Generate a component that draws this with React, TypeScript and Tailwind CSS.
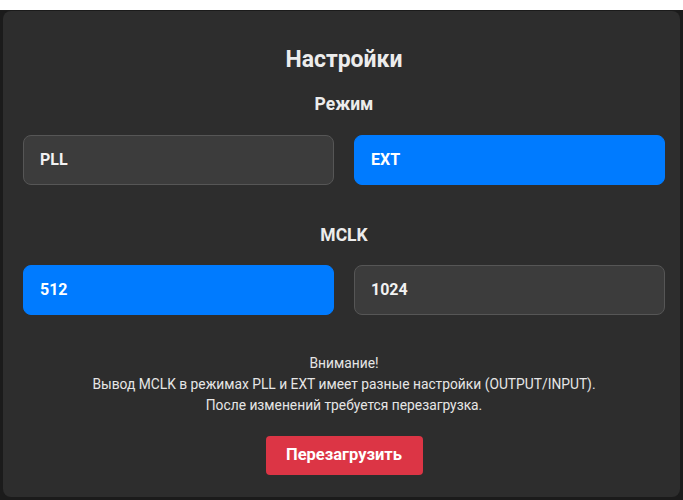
import { useState } from 'react';

const FONT = { fontFamily: 'Roboto, "Liberation Sans", Arial, sans-serif' };

function Choice({
  label,
  active,
  onClick,
}: {
  label: string;
  active: boolean;
  onClick: () => void;
}) {
  return (
    <button
      onClick={onClick}
      className={
        active
          ? 'h-[50px] flex-1 rounded-lg border border-[#007bff] bg-[#007bff] px-4 text-left text-[16px] font-bold text-white'
          : 'h-[50px] flex-1 rounded-lg border border-[#565656] bg-[#3c3c3c] px-4 text-left text-[16px] font-bold text-[#f2f2f2]'
      }
    >
      {label}
    </button>
  );
}

export default function App() {
  const [mode, setMode] = useState<'PLL' | 'EXT'>('EXT');
  const [mclk, setMclk] = useState<512 | 1024>(512);

  return (
    <div className="min-h-[500px] bg-[#1b1b1b]" style={FONT}>
      <div className="h-[10px] bg-white" />
      <div className="pt-px pl-[3px]">
        <div className="flex h-[486px] w-[677px] flex-col rounded-lg bg-[#2d2d2d] pt-[34px] pr-[15px] pl-5">
          <h1 className="text-center text-[23px] leading-[30px] font-bold text-[#ececec]">
            Настройки
          </h1>

          {/* Mode */}
          <h2 className="mt-[17px] text-center text-[17.5px] leading-6 font-bold text-[#ececec]">
            Режим
          </h2>
          <div className="mt-[19px] flex gap-5">
            <Choice label="PLL" active={mode === 'PLL'} onClick={() => setMode('PLL')} />
            <Choice label="EXT" active={mode === 'EXT'} onClick={() => setMode('EXT')} />
          </div>

          {/* MCLK */}
          <h2 className="mt-[38px] text-center text-[17.5px] leading-6 font-bold text-[#ececec]">
            MCLK
          </h2>
          <div className="mt-[18px] flex gap-5">
            <Choice label="512" active={mclk === 512} onClick={() => setMclk(512)} />
            <Choice label="1024" active={mclk === 1024} onClick={() => setMclk(1024)} />
          </div>

          <div className="mt-[38px] text-center text-[13.8px] leading-[21px] text-[#e6e6e6]">
            <p>Внимание!</p>
            <p>Вывод MCLK в режимах PLL и EXT имеет разные настройки (OUTPUT/INPUT).</p>
            <p>После изменений требуется перезагрузка.</p>
          </div>

          <div className="mt-5 flex justify-center">
            <button className="h-[39px] w-[157px] rounded bg-[#dc3545] text-[16.5px] font-bold text-white">
              Перезагрузить
            </button>
          </div>
        </div>
      </div>
    </div>
  );
}
